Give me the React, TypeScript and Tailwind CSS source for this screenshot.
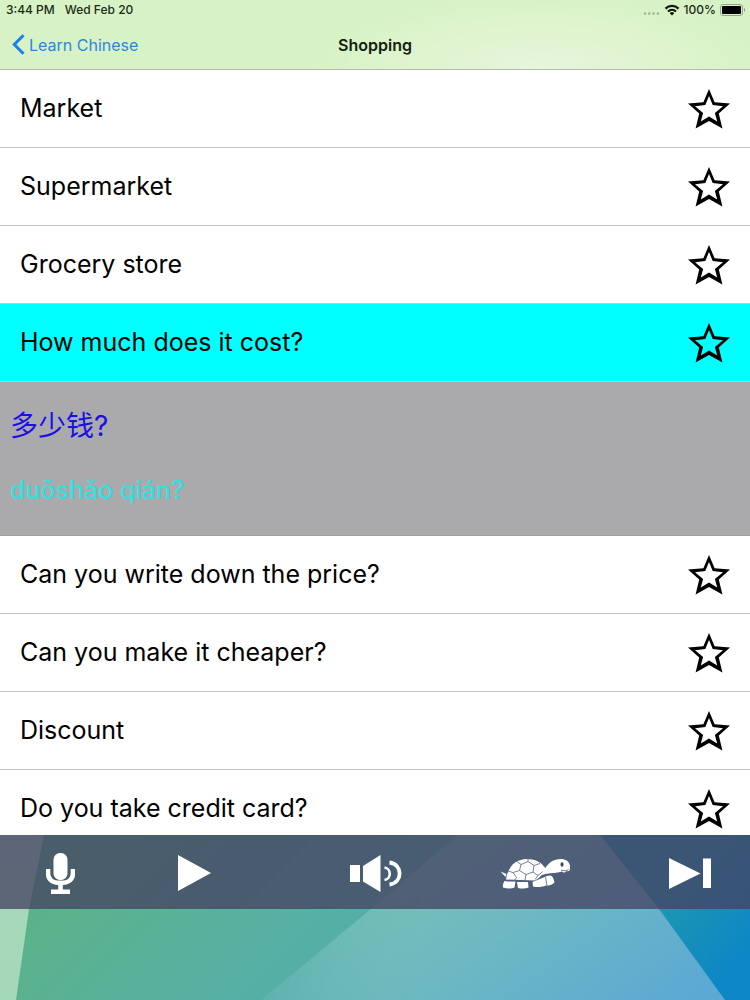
import { useState } from 'react';

type Phrase = {
  text: string;
  chinese?: string;
  pinyin?: string;
};

const phrases: Phrase[] = [
  { text: 'Market' },
  { text: 'Supermarket' },
  { text: 'Grocery store' },
  { text: 'How much does it cost?', chinese: '多少钱?', pinyin: 'duōshǎo qián?' },
  { text: 'Can you write down the price?' },
  { text: 'Can you make it cheaper?' },
  { text: 'Discount' },
  { text: 'Do you take credit card?' },
];

function StatusBar() {
  return (
    <div className="flex h-5 items-center justify-between pl-1.5 pr-1 text-[12px] font-medium text-[#1c2b17]">
      <div className="flex gap-2.5">
        <span>3:44 PM</span>
        <span>Wed Feb 20</span>
      </div>
      <div className="flex items-center gap-1">
        <svg className="h-3 w-[18px]" viewBox="0 0 18 12" fill="#9cb094">
          <circle cx="3" cy="9.5" r="1.2" />
          <circle cx="7.3" cy="9.5" r="1.2" />
          <circle cx="11.6" cy="9.5" r="1.2" />
          <circle cx="15.9" cy="9.5" r="1.2" />
        </svg>
        <svg className="h-3 w-4" viewBox="0 0 16 12" fill="none" stroke="#10180d" strokeWidth="2.2">
          <path d="M1.5 4.6a9.3 9.3 0 0 1 13 0" />
          <path d="M4 7.5a5.8 5.8 0 0 1 8 0" />
          <path d="M8 11.5 5.7 9.200a3.3 3.3 0 0 1 4.6 0Z" fill="#10180d" stroke="none" />
        </svg>
        <span>100%</span>
        <svg className="h-3 w-[26px]" viewBox="0 0 26 12">
          <rect x="0.5" y="0.5" width="22" height="11" rx="2.5" fill="none" stroke="#93a38c" />
          <rect x="2" y="2" width="19" height="8" rx="1" fill="#000" />
          <path d="M24 4v4a2.2 2.2 0 0 0 0-4Z" fill="#93a38c" />
        </svg>
      </div>
    </div>
  );
}

function Star({ filled }: { filled: boolean }) {
  return (
    <svg className="h-10 w-[42px]" viewBox="0 0 42 40">
      <path
        fillRule="evenodd"
        d={
          'M21 0 26.6 13.3 42 14.6 30.8 24.4 34.4 39.5 21 32 7.6 39.5 11.2 24.4 0 14.6 15.4 13.3Z' +
          (filled ? '' : 'M21 7 17.3 16 7 17.2 15.1 24 12.8 32.6 21 27.4 29.2 32.6 26.9 24 35 17.2 24.7 16Z')
        }
      />
    </svg>
  );
}

function Wallpaper() {
  return (
    <svg className="absolute inset-0 h-full w-full" viewBox="0 0 750 165" preserveAspectRatio="none">
      <defs>
        <linearGradient id="green" gradientUnits="userSpaceOnUse" x1="60" y1="60" x2="300" y2="300">
          <stop offset="0" stopColor="#5bb28a" />
          <stop offset="0.55" stopColor="#57b0a4" />
          <stop offset="1" stopColor="#4eaab4" />
        </linearGradient>
        <linearGradient id="teal" gradientUnits="userSpaceOnUse" x1="420" y1="50" x2="560" y2="250">
          <stop offset="0" stopColor="#76bfb8" />
          <stop offset="0.5" stopColor="#69b5c6" />
          <stop offset="1" stopColor="#5ca9d4" />
        </linearGradient>
        {/* the lighter facet fades out to the left as it goes down */}
        <linearGradient id="facet" gradientUnits="userSpaceOnUse" x1="260" y1="0" x2="440" y2="0">
          <stop offset="0" stopColor="#5ab0ac" stopOpacity="0.9" />
          <stop offset="1" stopColor="#6fbabc" stopOpacity="0" />
        </linearGradient>
        <linearGradient id="blue" gradientUnits="userSpaceOnUse" x1="660" y1="60" x2="740" y2="130">
          <stop offset="0" stopColor="#1f97b0" />
          <stop offset="1" stopColor="#0c86c6" />
        </linearGradient>
        <linearGradient id="mint" x1="0" y1="0" x2="0" y2="1">
          <stop offset="0" stopColor="#a9d8c0" />
          <stop offset="1" stopColor="#a4d8b6" />
        </linearGradient>
      </defs>
      <rect width="750" height="165" fill="url(#green)" />
      <path d="M0 0H44L29 74 16 165H0Z" fill="url(#mint)" />
      <path d="M457 0H750V165H262L371 74Z" fill="url(#teal)" />
      <path d="M457 0H750V165H262L371 74Z" fill="url(#facet)" />
      <path d="M600 0H750V165H725L659 74Z" fill="url(#blue)" />
    </svg>
  );
}

function MicIcon() {
  return (
    <svg className="h-[41px] w-[29px]" viewBox="0 0 29 41" fill="currentColor">
      <rect x="7.5" y="0" width="14" height="27" rx="6.5" />
      <path d="M0 16h4.3v4.5a7 7 0 0 0 7 7h6.4a7 7 0 0 0 7-7V16H29v5.5c0 6-4.5 10-12.2 10.5v4.5H24V41H5v-4.5h7.2V32C4.5 31.5 0 27.5 0 21.5Z" />
    </svg>
  );
}

function PlayIcon() {
  return (
    <svg className="h-9 w-[33px]" viewBox="0 0 33 36" fill="currentColor">
      <path d="M0 0 33 18 0 36Z" />
    </svg>
  );
}

function SpeakerIcon() {
  return (
    <svg className="h-[37px] w-[52px]" viewBox="0 0 52 37" fill="currentColor">
      <rect x="0" y="10" width="10" height="17" />
      <path d="M13 11 30.5 0v37L13 26.5Z" />
      <path d="M34.500 12.5c7 1 7 11.500 0 12.500" fill="none" stroke="currentColor" strokeWidth="2.6" />
      <path d="M39.500 7.500c13.500 1.500 13.500 20.500 0 22" fill="none" stroke="currentColor" strokeWidth="3.8" />
    </svg>
  );
}

function TurtleIcon() {
  return (
    <svg className="h-8 w-[70px]" viewBox="0 0 70 32" fill="currentColor">
      {/* shell */}
      <path d="M6 22.500C8 10 15 2 27 2c9 0 15 4 18.500 9.500C43 17 39.500 21.500 34.500 23.500Z" />
      <g fill="none" stroke="#66738a" strokeWidth="0.9">
        <path d="m21 7.500 7-3 6 4-1 6.500-7 2.500-6.500-4Z" />
        <path d="m21 7.500-4-3M28 4.500V2M34 8.500l6-2M33 15l5 3.500M26 17.500l-1 6M19.500 13.500 13 15.500 8 14M13 15.500l3.500 5-2 2.500M38 18.500l-3 4M38 18.500l5-4" />
      </g>
      {/* neck and head */}
      <path d="M39.500 19c4-4 6.500-11 12-14.500C57 1 67 .5 69.500 7c1 3.500.8 5.500-.5 7l-2.500.3-2.500 1.500-2-1.300C54 17 48 15 39.500 19Z" />
      <ellipse cx="62" cy="7.500" rx="1.500" ry="2.200" fill="#34445a" />
      <path d="m61 13.300 5 .5 2.500-1.300" fill="none" stroke="#4d5c72" strokeWidth="0.8" />
      {/* tail and legs */}
      <path d="m.5 14.500 6 2.500-1 3Z" />
      <path d="M4.500 24c4 .8 7 .5 11 .5l-1 6c-3 1.200-7 1.200-11.500 0-.5-2 .3-4.500 1.500-6.500ZM17 25h11l.5 5.500c-4 1.500-7 1.300-10.500.5ZM32.500 25l14.500-6c4-1.500 6-.5 7.500 6.500-2.500 2.500-5 3-8.500 3-4 1.500-8 2-13 1Z" />
      <path d="m45.500 20 1.500 8.500" stroke="#66738a" strokeWidth="0.9" />
    </svg>
  );
}

function NextIcon() {
  return (
    <svg className="h-[31px] w-[42px]" viewBox="0 0 42 31" fill="currentColor">
      <path d="M0 0 31.500 15.500 0 31Z" />
      <rect x="34" y="0.500" width="8" height="29.500" />
    </svg>
  );
}

export default function App() {
  const [selected, setSelected] = useState(3);
  const [starred, setStarred] = useState<number[]>([]);

  const toggleStar = (i: number) => {
    setStarred((prev) => (prev.includes(i) ? prev.filter((n) => n !== i) : [...prev, i]));
  };

  return (
    <div className="flex h-screen flex-col overflow-hidden bg-white font-['Inter','Noto_Sans_CJK_SC',sans-serif] text-black">
      <header className="shrink-0 border-b border-[#b5bdae] bg-[#d7f3c5] bg-[radial-gradient(ellipse_30%_110%_at_72%_100%,#e8f5dd,#e0f4d0_50%,transparent)]">
        <StatusBar />
        <nav className="grid h-[49px] grid-cols-3 items-center px-3">
          <a href="#" className="flex items-center gap-1 text-base text-[#2f86e0]">
            <svg className="h-[21px] w-[13px]" viewBox="0 0 13 21" fill="none" stroke="#1a7df0" strokeWidth="3">
              <path d="m11.500 1.200-9.200 9.300 9.200 9.300" />
            </svg>
            Learn Chinese
          </a>
          <h1 className="text-center text-base font-semibold text-[#13200f]">Shopping</h1>
        </nav>
      </header>

      <ul className="min-h-0 flex-1 overflow-hidden">
        {phrases.map((phrase, i) => (
          <li key={phrase.text}>
            <div
              className={`flex h-[78px] items-center border-b border-[#c6c6c8] px-5 ${
                i === selected ? 'bg-[#00ffff]' : 'bg-white'
              }`}
            >
              <button onClick={() => setSelected(i)} className="h-full flex-1 text-left text-[25px]">
                {phrase.text}
              </button>
              <button onClick={() => toggleStar(i)} aria-label={`Favorite ${phrase.text}`}>
                <Star filled={starred.includes(i)} />
              </button>
            </div>
            {i === selected && phrase.chinese && (
              <div className="flex h-[154px] flex-col gap-6 border-b border-[#a0a0a2] bg-[#aaaaac] px-2.5 pt-6 leading-10">
                <p lang="zh-CN" className="text-[28px] text-[#1a10e6]">{phrase.chinese}</p>
                <p className="text-[25px] font-medium text-[#35dede]">{phrase.pinyin}</p>
              </div>
            )}
          </li>
        ))}
      </ul>

      <footer className="relative shrink-0 pb-[91px]">
        <Wallpaper />
        <div className="relative flex h-[74px] items-center justify-between bg-[#444060]/75 pl-[46px] pr-[39px] pt-0.5 text-white">
          <button aria-label="Record" className="pr-1">
            <MicIcon />
          </button>
          <button aria-label="Play">
            <PlayIcon />
          </button>
          <button aria-label="Speak" className="pl-10">
            <SpeakerIcon />
          </button>
          <button aria-label="Slow">
            <TurtleIcon />
          </button>
          <button aria-label="Next">
            <NextIcon />
          </button>
        </div>
      </footer>
    </div>
  );
}
